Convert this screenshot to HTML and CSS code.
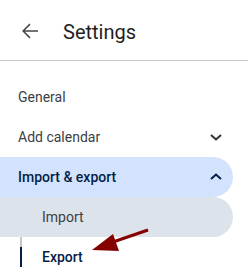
FILE: index.html
```html
<!DOCTYPE html>
<html lang="en">
<head>
    <meta charset="UTF-8">
    <meta name="viewport" content="width=device-width, initial-scale=1.0">
    <title>Settings</title>
    <link rel="stylesheet" href="styles.css">
</head>
<body>
    <div class="page">
        <header class="header">
            <svg class="back" viewBox="0 0 24 24" width="24" height="24">
                <path d="M20 11.25H6.9l5.6-5.6L11.45 4.6 4.05 12l7.4 7.4 1.05-1.05-5.6-5.6H20z" fill="#444746"/>
            </svg>
            <h1>Settings</h1>
        </header>
        <nav class="menu">
            <div class="item">General</div>
            <div class="item">
                <span>Add calendar</span>
                <svg class="chev" viewBox="0 0 24 24" width="24" height="24">
                    <polyline points="7,10 12,14.5 17,10" fill="none" stroke="#303134" stroke-width="2"/>
                </svg>
            </div>
            <div class="item open">
                <span>Import &amp; export</span>
                <svg class="chev" viewBox="0 0 24 24" width="24" height="24">
                    <polyline points="7,14 12,9.5 17,14" fill="none" stroke="#041e49" stroke-width="2"/>
                </svg>
            </div>
            <div class="sub">
                <div class="item subitem hover">Import</div>
                <div class="item subitem active">Export</div>
            </div>
        </nav>
        <svg class="pointer" viewBox="0 0 248 280" width="248" height="280">
            <line x1="148" y1="230" x2="110" y2="243" stroke="#850000" stroke-width="3"/>
            <polygon points="92,250 113,234 119,251" fill="#850000"/>
        </svg>
    </div>
</body>
</html>
```

FILE: styles.css
```css
body {
    margin: 0;
    font-family: Roboto, "Liberation Sans", sans-serif;
    background-color: #fff;
    color: #3c4043;
}

.page {
    position: relative;
    width: 248px;
    height: 280px;
    overflow: hidden;
}

.header {
    height: 60px;
    border-bottom: 1px solid #c7c7c7;
    display: flex;
    align-items: center;
    padding-left: 18px;
}

.back {
    display: block;
    margin-top: 1px;
}

h1 {
    margin: 0 0 0 21px;
    font-size: 20px;
    font-weight: 400;
    color: #1f1f1f;
    padding-top: 3px;
}

.menu {
    padding-top: 16px;
}

.item {
    height: 40px;
    margin-right: 15px;
    padding: 0 5px 0 18px;
    display: flex;
    align-items: center;
    justify-content: space-between;
    font-size: 14px;
    color: #3c4043;
    border-radius: 0 20px 20px 0;
}

.item.open {
    background-color: #d3e3fd;
    color: #041e49;
    font-weight: 500;
}

.chev {
    display: block;
}

.sub {
    position: relative;
}

.sub::before {
    content: "";
    position: absolute;
    left: 20px;
    top: 10px;
    bottom: 10px;
    width: 2px;
    background-color: #c7c7c7;
}

.subitem {
    position: relative;
    padding-left: 42px;
}

.subitem.hover {
    background-color: #dde3ea;
}

.subitem.active {
    color: #041e49;
    font-weight: 500;
}

.subitem.active::before {
    content: "";
    position: absolute;
    left: 20px;
    top: 10px;
    bottom: 10px;
    width: 2px;
    background-color: #041e49;
}

.pointer {
    position: absolute;
    left: 0;
    top: 0;
    pointer-events: none;
}
```
